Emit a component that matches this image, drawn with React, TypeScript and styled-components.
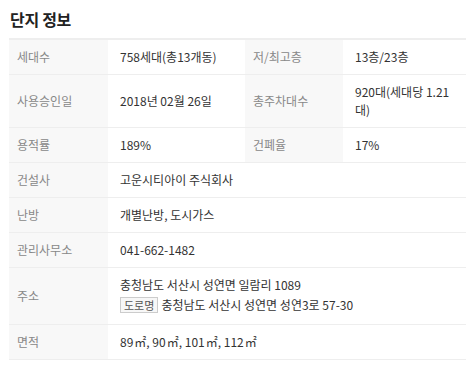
import React from "react";
import styled, { createGlobalStyle } from "styled-components";

const GlobalStyle = createGlobalStyle`
  html, body {
    margin: 0;
    padding: 0;
    background: #ffffff;
  }
  body {
    font-family: "Noto Sans CJK KR", "Noto Sans", sans-serif;
    color: #333333;
  }
`;

const Wrapper = styled.section`
  padding: 8px 0 0 9px;
  width: 457px;
`;

const Title = styled.h2`
  margin: 0 0 0 1px;
  font-size: 16px;
  line-height: 22px;
  font-weight: 700;
  color: #222222;
  letter-spacing: -0.3px;
`;

const Table = styled.table`
  margin-top: 8px;
  width: 457px;
  border-collapse: collapse;
  table-layout: fixed;
  border-top: 2px solid #eeeeee;
  font-size: 12px;
  line-height: 18px;
`;

const Row = styled.tr`
  border-bottom: 1px solid #eeeeee;
`;

const Label = styled.th`
  background: #f8f8f8;
  color: #888888;
  font-weight: 400;
  text-align: left;
  vertical-align: middle;
  padding: 8px 8px;
`;

const Value = styled.td`
  color: #333333;
  vertical-align: middle;
  padding: 8px 12px 8px 12px;
  word-break: keep-all;
`;

const AddressLine = styled.div<{ $tall?: boolean }>`
  line-height: ${({ $tall }) => ($tall ? "22px" : "18px")};
  display: flex;
  align-items: center;
  gap: 3px;
`;

const Badge = styled.span`
  display: inline-block;
  box-sizing: border-box;
  height: 16px;
  line-height: 14px;
  padding: 0 3px;
  border: 1px solid #cccccc;
  background: #f7f7f7;
  color: #555555;
  font-size: 11px;
`;

const Unit = styled.span`
  font-size: 12px;
  margin-left: 1px;
`;

const m2 = <Unit>㎡</Unit>;

export default function App() {
  return (
    <>
      <GlobalStyle />
      <Wrapper>
        <Title>단지 정보</Title>
        <Table>
          <colgroup>
            <col style={{ width: 99 }} />
            <col style={{ width: 137 }} />
            <col style={{ width: 98 }} />
            <col />
          </colgroup>
          <tbody>
            <Row>
              <Label>세대수</Label>
              <Value>758세대(총13개동)</Value>
              <Label>저/최고층</Label>
              <Value>13층/23층</Value>
            </Row>
            <Row>
              <Label>사용승인일</Label>
              <Value>2018년 02월 26일</Value>
              <Label>총주차대수</Label>
              <Value>920대(세대당 1.21 대)</Value>
            </Row>
            <Row>
              <Label>용적률</Label>
              <Value>189%</Value>
              <Label>건폐율</Label>
              <Value>17%</Value>
            </Row>
            <Row>
              <Label>건설사</Label>
              <Value colSpan={3}>고운시티아이 주식회사</Value>
            </Row>
            <Row>
              <Label>난방</Label>
              <Value colSpan={3}>개별난방, 도시가스</Value>
            </Row>
            <Row>
              <Label>관리사무소</Label>
              <Value colSpan={3}>041-662-1482</Value>
            </Row>
            <Row>
              <Label>주소</Label>
              <Value colSpan={3}>
                <AddressLine>충청남도 서산시 성연면 일람리 1089</AddressLine>
                <AddressLine $tall>
                  <Badge>도로명</Badge>
                  충청남도 서산시 성연면 성연3로 57-30
                </AddressLine>
              </Value>
            </Row>
            <Row>
              <Label>면적</Label>
              <Value colSpan={3}>
                89{m2}, 90{m2}, 101{m2}, 112{m2}
              </Value>
            </Row>
          </tbody>
        </Table>
      </Wrapper>
    </>
  );
}
